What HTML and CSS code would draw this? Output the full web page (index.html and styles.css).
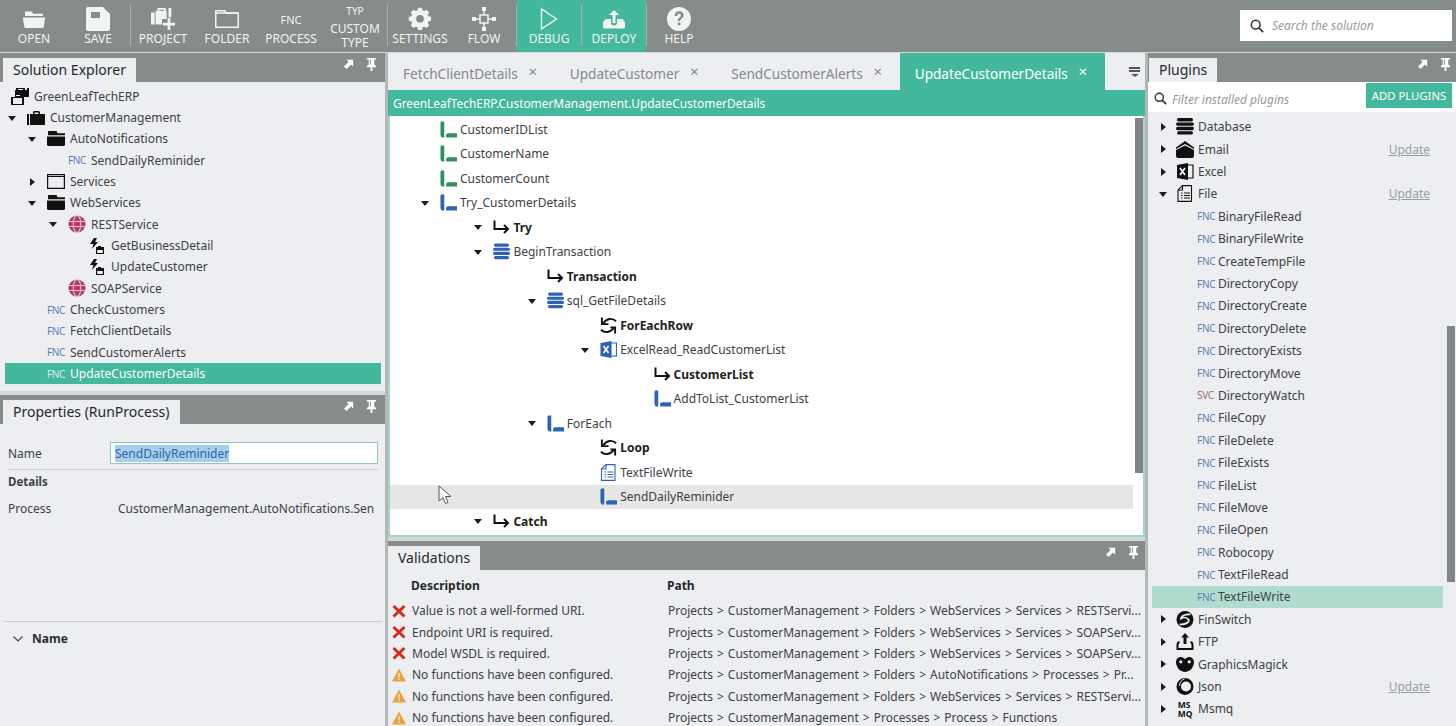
FILE: index.html
```html
<!DOCTYPE html>
<html lang="en">
<head>
  <meta charset="UTF-8">
  <meta name="viewport" content="width=device-width, initial-scale=1.0">
  <title>Solution Designer</title>
  <link rel="stylesheet" href="styles.css">
</head>
<body>
  <!-- Icon sprite -->
  <svg class="sprite" xmlns="http://www.w3.org/2000/svg">
    <symbol id="i-open" viewBox="0 0 32 24"><path d="M4 2h9l2 3h13v3H4z"/><path d="M1 10h30l-2 12a2 2 0 0 1-2 2H5a2 2 0 0 1-2-2z"/></symbol>
    <symbol id="i-save" viewBox="0 0 24 24"><path fill-rule="evenodd" d="M2 0h15l7 7v15a2 2 0 0 1-2 2H2a2 2 0 0 1-2-2V2a2 2 0 0 1 2-2zm3 5v6h9V5z"/><rect x="6" y="6.500" width="3" height="3" fill="#868c8a"/></symbol>
    <symbol id="i-project" viewBox="0 0 26 24"><path d="M0 5h4v13H0zM5 3h2V0h9v3h1v9h-5v6H5zM9 2v1h5V2zM19 0h3v10h-3z"/><path d="M18 11h3v5h5v3h-5v5h-3v-5h-5v-3h5z"/></symbol>
    <symbol id="i-folder-line" viewBox="0 0 32 24"><path fill="none" stroke="currentColor" stroke-width="2" d="M1 23V1h12l2 3h16v19z"/><path d="M1 3h30v2H1z"/></symbol>
    <symbol id="i-gear" viewBox="0 0 24 24"><path fill-rule="evenodd" d="M9.500 0h5l.7 3.300 2 .8L20 2.300l3.500 3.500-1.800 2.800.8 2 3.300.7v5l-3.300.7-.8 2 1.800 2.800-3.500 3.500-2.800-1.800-2 .8-.7 3.300h-5l-.7-3.300-2-.8L4 25.300.5 21.800l1.800-2.800-.8-2L-2 16.300v-5l3.300-.7.8-2L.3 5.800 3.800 2.300l2.800 1.800 2-.8zM12 9a4.800 4.800 0 1 0 0 9.600A4.800 4.800 0 0 0 12 9z" transform="scale(.8) translate(3 1)"/></symbol>
    <symbol id="i-flow" viewBox="0 0 24 24"><g fill="none" stroke="currentColor" stroke-width="1.500"><rect x="8" y="8" width="8" height="8"/><path d="M12 4v4M12 16v4M4 12h4M16 12h4"/></g><rect x="10" y="0" width="4" height="4"/><rect x="10" y="20" width="4" height="4"/><rect x="0" y="10" width="4" height="4"/><rect x="20" y="10" width="4" height="4"/></symbol>
    <symbol id="i-play" viewBox="0 0 18 24"><path fill="none" stroke="currentColor" stroke-width="1.400" d="M1.500 2v20L16.500 12z"/></symbol>
    <symbol id="i-deploy" viewBox="0 0 24 24"><path d="M12 3l5 5h-3.500v8h-3V8H7z"/><path d="M5 12h4v4c0 1.500 1 2.500 3 2.500s3-1 3-2.500v-4h4c2 0 4 2 4 4.500V20a1.500 1.500 0 0 1-1.500 1.500h-19A1.500 1.500 0 0 1 1 20v-3.500C1 14 3 12 5 12z"/></symbol>
    <symbol id="i-help" viewBox="0 0 24 24"><path fill-rule="evenodd" d="M12 0a12 12 0 1 1 0 24 12 12 0 0 1 0-24zM7.500 9h2.700c0-1.500.7-2.200 1.900-2.200 1.100 0 1.800.6 1.800 1.600 0 1-.7 1.500-1.500 2.100-1.200.9-1.700 1.800-1.700 3.500h2.500c0-1.100.4-1.600 1.200-2.200 1.200-.9 2.200-1.800 2.200-3.500 0-2.500-1.900-4-4.400-4C9.400 4.300 7.600 6 7.500 9zm3.300 6.500v2.700h2.700v-2.700z"/></symbol>
    <symbol id="i-search" viewBox="0 0 16 16"><circle cx="6.500" cy="6.500" r="5" fill="none" stroke="currentColor" stroke-width="1.800"/><path d="M10 10l5 5" stroke="currentColor" stroke-width="2"/></symbol>
    <symbol id="i-float" viewBox="0 0 12 12"><path d="M3 1h8v8L8.500 6.500 3 12 0 9l5.500-5.500z"/></symbol>
    <symbol id="i-pin" viewBox="0 0 12 14"><path d="M1 0h10v1.500H9V7l2 1.500V10H7v4H5v-4H1V8.500L3 7V1.500H1zM4.500 1.500V7h1V1.500z"/></symbol>
    <symbol id="i-solution" viewBox="0 0 18 17"><path d="M5 0h9v2h2V0h2v9h-5v8H0V9h4V2h1zm2 1v1h5V1zM2 10v6h9v-6zm3-2h4V7H5z" fill-rule="evenodd"/></symbol>
    <symbol id="i-case" viewBox="0 0 18 14"><path fill-rule="evenodd" d="M0 3h2v11H0zM3 3h3V1l1-1h5l1 1v2h5v11H3zm4.500-1.500V3h4V1.500z"/></symbol>
    <symbol id="i-folder" viewBox="0 0 17 14"><path d="M1 0h8l1 2h7v2H1zM0 5h17v8a1 1 0 0 1-1 1H1a1 1 0 0 1-1-1z"/></symbol>
    <symbol id="i-folder-open" viewBox="0 0 18 15"><path fill="none" stroke="currentColor" stroke-width="1.200" d="M.6.600h16.800v13.800H.6z"/><path d="M.6 2h16.800v1H.6z"/></symbol>
    <symbol id="i-globe" viewBox="0 0 18 18"><circle cx="9" cy="9" r="8.600" fill="#b33a6a"/><path fill="none" stroke="#e7c3d2" stroke-width="1.100" d="M1 6.500h16M1 11.500h16"/><ellipse cx="9" cy="9" rx="3.800" ry="8.500" fill="none" stroke="#e7c3d2" stroke-width="1.100"/></symbol>
    <symbol id="i-op" viewBox="0 0 15 16"><path d="M4 0h3L5 4h3L2 11l1.500-5H0z"/><path d="M6 9h2V8h3v1h3v7H6zm1.200 3v3h5.600v-3z" fill-rule="evenodd"/></symbol>
    <symbol id="i-var" viewBox="0 0 18 17"><path d="M1.500 0H4.500v17H3.500C2 17 .5 16 .5 14V2C.5 1 1 0 1.500 0zM6.500 13.500c1 0 1.500-.5 1.500-1h10V17H6.500z"/></symbol>
    <symbol id="i-return" viewBox="0 0 17 14"><path fill="none" stroke="currentColor" stroke-width="2" d="M1.500 0v8.500h13"/><path fill="none" stroke="currentColor" stroke-width="2" d="M11 4.500l4 4-4 4"/></symbol>
    <symbol id="i-db" viewBox="0 0 18 17"><rect x="1" y="0" width="16" height="3.400" rx="1.700"/><rect x="0" y="4.400" width="18" height="3.400" rx="1.700"/><rect x="0" y="8.800" width="18" height="3.400" rx="1.700"/><rect x="1" y="13.200" width="16" height="3.400" rx="1.700"/></symbol>
    <symbol id="i-loop" viewBox="0 0 18 17"><g fill="none" stroke="currentColor" stroke-width="2"><path d="M17 4C13 0 7 1 3.500 6"/><path d="M2 0v7h7"/><path d="M1 13c4 4 10 3 13.500-2"/><path d="M16 17v-6.500h-5"/></g></symbol>
    <symbol id="i-excel" viewBox="0 0 16 17"><path d="M10 2h6v13h-6z" fill="none" stroke="currentColor" stroke-width="1.200"/><path d="M0 2l11-2v17L0 15z"/><path d="M3 5l5 7M8 5l-5 7" stroke="#fff" stroke-width="1.600"/></symbol>
    <symbol id="i-file" viewBox="0 0 16 17"><g fill="none" stroke="currentColor" stroke-width="1.100"><path d="M5.500.6h9v15.800H1V5z"/><path d="M5.500.6V5H1"/><path d="M7 8h6M7 10.500h6M7 13h6M4 8h1.500M4 10.500h1.500M4 13h1.500"/></g></symbol>
    <symbol id="i-cursor" viewBox="0 0 14 20"><path fill="#fff" stroke="#555" stroke-width="1" d="M1 1v15l4-3.500 2.500 6 2.500-1-2.500-6H13z"/></symbol>
    <symbol id="i-error" viewBox="0 0 14 14"><path d="M1.500 2l11 10.500M12.500 2L1.500 12.500" stroke="#d52b1e" stroke-width="3" fill="none"/></symbol>
    <symbol id="i-warn" viewBox="0 0 14 13"><path fill="#e9a33e" d="M7 0l7 13H0z"/><path d="M6.300 4.500h1.400v4.500H6.300zM6.300 10h1.400v1.500H6.300z" fill="#f7e6c8"/></symbol>
    <symbol id="i-mail" viewBox="0 0 18 17"><path d="M9 0l9 6.500V8L9 3 0 8V6.500zM0 9l9-4.500L18 9v6a2 2 0 0 1-2 2H2a2 2 0 0 1-2-2z"/></symbol>
    <symbol id="i-swirl" viewBox="0 0 17 17"><circle cx="8.500" cy="8.500" r="8.500"/><path fill="none" stroke="#eceef2" stroke-width="1.700" d="M14 3.500C10 3 5 4 4.500 7.500c2.500-1.500 6-1 8 1.500-.5 3-4.500 4.500-9.500 4.500"/></symbol>
    <symbol id="i-upload" viewBox="0 0 17 17"><path d="M8.500 0l4 4.500H10V11H7V4.500H4.500z"/><path fill="none" stroke="currentColor" stroke-width="2" d="M3 9c-2 .5-2 2-2 3v4h15v-4c0-1 0-2.500-2-3"/></symbol>
    <symbol id="i-magick" viewBox="0 0 17 14"><path fill-rule="evenodd" d="M4.500 0C6.200 0 7.500 1 8.500 2c1-1 2.300-2 4-2C15 0 17 2 17 5c0 1.500-.5 2.500-1 3.500-.8 3-3.500 5.500-7.500 5.500S1.800 11.500 1 8.500C.5 7.500 0 6.500 0 5c0-3 2-5 4.500-5zm0 3a1.500 1.500 0 1 0 0 3 1.500 1.500 0 0 0 0-3zm8 0a1.500 1.500 0 1 0 0 3 1.500 1.500 0 0 0 0-3z"/></symbol>
    <symbol id="i-ring" viewBox="0 0 17 17"><path fill-rule="evenodd" d="M8.500 0a8.500 8.500 0 1 1 0 17 8.500 8.500 0 0 1 0-17zm1 3.500a5 5 0 1 0 0 10 5 5 0 0 0 0-10z"/><path d="M8 1c-3 1-5 3.500-5 7" stroke="#eceef2" fill="none"/></symbol>
    <symbol id="i-chevron" viewBox="0 0 10 6"><path fill="none" stroke="currentColor" stroke-width="1.100" d="M.5.500L5 5 9.500.5"/></symbol>
  </svg>

  <header class="toolbar">
    <div class="tool"><svg class="tool-ic"><use href="#i-open"/></svg><span>OPEN</span></div>
    <div class="tool"><svg class="tool-ic"><use href="#i-save"/></svg><span>SAVE</span></div>
    <div class="sep"></div>
    <div class="tool"><svg class="tool-ic"><use href="#i-project"/></svg><span>PROJECT</span></div>
    <div class="tool"><svg class="tool-ic"><use href="#i-folder-line"/></svg><span>FOLDER</span></div>
    <div class="tool"><b class="tool-fnc">FNC</b><span>PROCESS</span></div>
    <div class="tool tool-stack"><b class="tool-typ">TYP</b><span>CUSTOM<br>TYPE</span></div>
    <div class="sep"></div>
    <div class="tool"><svg class="tool-ic"><use href="#i-gear"/></svg><span>SETTINGS</span></div>
    <div class="tool"><svg class="tool-ic"><use href="#i-flow"/></svg><span>FLOW</span></div>
    <div class="sep"></div>
    <div class="tool tool-on"><svg class="tool-ic"><use href="#i-play"/></svg><span>DEBUG</span></div>
    <div class="sep"></div>
    <div class="tool tool-on"><svg class="tool-ic"><use href="#i-deploy"/></svg><span>DEPLOY</span></div>
    <div class="sep"></div>
    <div class="tool"><svg class="tool-ic"><use href="#i-help"/></svg><span>HELP</span></div>
    <div class="search">
      <svg class="search-ic"><use href="#i-search"/></svg>
      <span>Search the solution</span>
    </div>
  </header>

  <main class="workspace">
    <section class="col-left">
      <div class="panel explorer">
        <div class="panel-head">
          <div class="panel-tab">Solution Explorer</div>
          <div class="panel-btns"><svg class="btn-float"><use href="#i-float"/></svg><svg class="btn-pin"><use href="#i-pin"/></svg></div>
        </div>
        <div class="side-tree">
          <div class="row root"><div class="ic-box"><svg class="ic-solution"><use href="#i-solution"/></svg></div><span>GreenLeafTechERP</span></div>
          <div class="row l1"><i class="arrow open"></i><div class="ic-box"><svg class="ic-case"><use href="#i-case"/></svg></div><span>CustomerManagement</span></div>
          <div class="row l2"><i class="arrow open"></i><div class="ic-box"><svg class="ic-folder"><use href="#i-folder"/></svg></div><span>AutoNotifications</span></div>
          <div class="row l3"><i class="arrow none"></i><div class="ic-box"><b class="fnc">FNC</b></div><span>SendDailyReminider</span></div>
          <div class="row l2"><i class="arrow"></i><div class="ic-box"><svg class="ic-folder"><use href="#i-folder-open"/></svg></div><span>Services</span></div>
          <div class="row l2"><i class="arrow open"></i><div class="ic-box"><svg class="ic-folder"><use href="#i-folder"/></svg></div><span>WebServices</span></div>
          <div class="row l3"><i class="arrow open"></i><div class="ic-box"><svg class="ic-globe"><use href="#i-globe"/></svg></div><span>RESTService</span></div>
          <div class="row l4"><i class="arrow none"></i><div class="ic-box"><svg class="ic-op"><use href="#i-op"/></svg></div><span>GetBusinessDetail</span></div>
          <div class="row l4"><i class="arrow none"></i><div class="ic-box"><svg class="ic-op"><use href="#i-op"/></svg></div><span>UpdateCustomer</span></div>
          <div class="row l3"><i class="arrow none"></i><div class="ic-box"><svg class="ic-globe"><use href="#i-globe"/></svg></div><span>SOAPService</span></div>
          <div class="row l2"><i class="arrow none"></i><div class="ic-box"><b class="fnc">FNC</b></div><span>CheckCustomers</span></div>
          <div class="row l2"><i class="arrow none"></i><div class="ic-box"><b class="fnc">FNC</b></div><span>FetchClientDetails</span></div>
          <div class="row l2"><i class="arrow none"></i><div class="ic-box"><b class="fnc">FNC</b></div><span>SendCustomerAlerts</span></div>
          <div class="row l2 selected"><i class="arrow none"></i><div class="ic-box"><b class="fnc">FNC</b></div><span>UpdateCustomerDetails</span></div>
        </div>
      </div>
      <div class="split-h"></div>
      <div class="panel properties">
        <div class="panel-head">
          <div class="panel-tab">Properties (RunProcess)</div>
          <div class="panel-btns"><svg class="btn-float"><use href="#i-float"/></svg><svg class="btn-pin"><use href="#i-pin"/></svg></div>
        </div>
        <div class="prop-body">
          <div class="prop-row">
            <span class="prop-label">Name</span>
            <div class="prop-input"><span class="text-sel">SendDailyReminider</span></div>
          </div>
          <div class="prop-title">Details</div>
          <div class="prop-row prop-row-plain">
            <span class="prop-label">Process</span>
            <span class="prop-value">CustomerManagement.AutoNotifications.Sen</span>
          </div>
        </div>
        <div class="prop-foot"><svg class="ic-chevron"><use href="#i-chevron"/></svg><b>Name</b></div>
      </div>
    </section>

    <div class="split-v"></div>

    <section class="col-center">
      <div class="editor">
        <div class="tabs">
          <div class="tab">FetchClientDetails<span class="tab-x">×</span></div>
          <div class="tab">UpdateCustomer<span class="tab-x">×</span></div>
          <div class="tab">SendCustomerAlerts<span class="tab-x">×</span></div>
          <div class="tab tab-on">UpdateCustomerDetails<span class="tab-x">×</span></div>
          <div class="tabs-menu"><i></i><i></i><em></em></div>
        </div>
        <div class="crumb">GreenLeafTechERP.CustomerManagement.UpdateCustomerDetails</div>
        <div class="flow-tree">
          <div class="row d0"><i class="arrow none"></i><div class="ic-box"><svg class="ic-var green"><use href="#i-var"/></svg></div><span>CustomerIDList</span></div>
          <div class="row d0"><i class="arrow none"></i><div class="ic-box"><svg class="ic-var green"><use href="#i-var"/></svg></div><span>CustomerName</span></div>
          <div class="row d0"><i class="arrow none"></i><div class="ic-box"><svg class="ic-var green"><use href="#i-var"/></svg></div><span>CustomerCount</span></div>
          <div class="row d0"><i class="arrow open"></i><div class="ic-box"><svg class="ic-var blue"><use href="#i-var"/></svg></div><span>Try_CustomerDetails</span></div>
          <div class="row d1 strong"><i class="arrow open"></i><div class="ic-box"><svg class="ic-var"><use href="#i-return"/></svg></div><span>Try</span></div>
          <div class="row d1"><i class="arrow open"></i><div class="ic-box"><svg class="ic-var blue"><use href="#i-db"/></svg></div><span>BeginTransaction</span></div>
          <div class="row d2 strong"><i class="arrow none"></i><div class="ic-box"><svg class="ic-var"><use href="#i-return"/></svg></div><span>Transaction</span></div>
          <div class="row d2"><i class="arrow open"></i><div class="ic-box"><svg class="ic-var blue"><use href="#i-db"/></svg></div><span>sql_GetFileDetails</span></div>
          <div class="row d3 strong"><i class="arrow none"></i><div class="ic-box"><svg class="ic-var"><use href="#i-loop"/></svg></div><span>ForEachRow</span></div>
          <div class="row d3"><i class="arrow open"></i><div class="ic-box"><svg class="ic-var blue"><use href="#i-excel"/></svg></div><span>ExcelRead_ReadCustomerList</span></div>
          <div class="row d4 strong"><i class="arrow none"></i><div class="ic-box"><svg class="ic-var"><use href="#i-return"/></svg></div><span>CustomerList</span></div>
          <div class="row d4"><i class="arrow none"></i><div class="ic-box"><svg class="ic-var blue"><use href="#i-var"/></svg></div><span>AddToList_CustomerList</span></div>
          <div class="row d2"><i class="arrow open"></i><div class="ic-box"><svg class="ic-var blue"><use href="#i-var"/></svg></div><span>ForEach</span></div>
          <div class="row d3 strong"><i class="arrow none"></i><div class="ic-box"><svg class="ic-var"><use href="#i-loop"/></svg></div><span>Loop</span></div>
          <div class="row d3"><i class="arrow none"></i><div class="ic-box"><svg class="ic-var blue"><use href="#i-file"/></svg></div><span>TextFileWrite</span></div>
          <div class="row d3 hovered"><i class="arrow none"></i><div class="ic-box"><svg class="ic-var blue"><use href="#i-var"/></svg></div><span>SendDailyReminider</span></div>
          <div class="row d1 strong"><i class="arrow open"></i><div class="ic-box"><svg class="ic-var"><use href="#i-return"/></svg></div><span>Catch</span></div>
          <div class="scroll scroll-flow"></div>
          <svg class="mouse"><use href="#i-cursor"/></svg>
        </div>
      </div>
      <div class="split-h"></div>
      <div class="panel validations">
        <div class="panel-head">
          <div class="panel-tab">Validations</div>
          <div class="panel-btns"><svg class="btn-float"><use href="#i-float"/></svg><svg class="btn-pin"><use href="#i-pin"/></svg></div>
        </div>
        <div class="val-head"><b>Description</b><b>Path</b></div>
        <div class="val-row"><svg class="val-ic"><use href="#i-error"/></svg><span class="val-desc">Value is not a well-formed URI.</span><span class="val-path">Projects &gt; CustomerManagement &gt; Folders &gt; WebServices &gt; Services &gt; RESTServi...</span></div>
        <div class="val-row"><svg class="val-ic"><use href="#i-error"/></svg><span class="val-desc">Endpoint URI is required.</span><span class="val-path">Projects &gt; CustomerManagement &gt; Folders &gt; WebServices &gt; Services &gt; SOAPServ...</span></div>
        <div class="val-row"><svg class="val-ic"><use href="#i-error"/></svg><span class="val-desc">Model WSDL is required.</span><span class="val-path">Projects &gt; CustomerManagement &gt; Folders &gt; WebServices &gt; Services &gt; SOAPServ...</span></div>
        <div class="val-row"><svg class="val-ic"><use href="#i-warn"/></svg><span class="val-desc">No functions have been configured.</span><span class="val-path">Projects &gt; CustomerManagement &gt; Folders &gt; AutoNotifications &gt; Processes &gt; Pr...</span></div>
        <div class="val-row"><svg class="val-ic"><use href="#i-warn"/></svg><span class="val-desc">No functions have been configured.</span><span class="val-path">Projects &gt; CustomerManagement &gt; Folders &gt; WebServices &gt; Services &gt; RESTServi...</span></div>
        <div class="val-row"><svg class="val-ic"><use href="#i-warn"/></svg><span class="val-desc">No functions have been configured.</span><span class="val-path">Projects &gt; CustomerManagement &gt; Processes &gt; Process &gt; Functions</span></div>
      </div>
    </section>

    <div class="split-v"></div>

    <section class="panel col-right">
      <div class="panel-head">
        <div class="panel-tab">Plugins</div>
        <div class="panel-btns"><svg class="btn-float"><use href="#i-float"/></svg><svg class="btn-pin"><use href="#i-pin"/></svg></div>
      </div>
      <div class="filter">
        <svg class="filter-ic"><use href="#i-search"/></svg>
        <span class="filter-text">Filter installed plugins</span>
        <div class="add-btn">ADD PLUGINS</div>
      </div>
      <div class="plugin-tree">
        <div class="row plug"><i class="arrow"></i><div class="ic-box"><svg class="ic-plug"><use href="#i-db"/></svg></div><span>Database</span></div>
        <div class="row plug"><i class="arrow"></i><div class="ic-box"><svg class="ic-plug"><use href="#i-mail"/></svg></div><span>Email</span><a class="update">Update</a></div>
        <div class="row plug"><i class="arrow"></i><div class="ic-box"><svg class="ic-plug"><use href="#i-excel"/></svg></div><span>Excel</span></div>
        <div class="row plug"><i class="arrow open"></i><div class="ic-box"><svg class="ic-plug"><use href="#i-file"/></svg></div><span>File</span><a class="update">Update</a></div>
        <div class="row child"><b class="fnc">FNC</b><span>BinaryFileRead</span></div>
        <div class="row child"><b class="fnc">FNC</b><span>BinaryFileWrite</span></div>
        <div class="row child"><b class="fnc">FNC</b><span>CreateTempFile</span></div>
        <div class="row child"><b class="fnc">FNC</b><span>DirectoryCopy</span></div>
        <div class="row child"><b class="fnc">FNC</b><span>DirectoryCreate</span></div>
        <div class="row child"><b class="fnc">FNC</b><span>DirectoryDelete</span></div>
        <div class="row child"><b class="fnc">FNC</b><span>DirectoryExists</span></div>
        <div class="row child"><b class="fnc">FNC</b><span>DirectoryMove</span></div>
        <div class="row child"><b class="fnc svc">SVC</b><span>DirectoryWatch</span></div>
        <div class="row child"><b class="fnc">FNC</b><span>FileCopy</span></div>
        <div class="row child"><b class="fnc">FNC</b><span>FileDelete</span></div>
        <div class="row child"><b class="fnc">FNC</b><span>FileExists</span></div>
        <div class="row child"><b class="fnc">FNC</b><span>FileList</span></div>
        <div class="row child"><b class="fnc">FNC</b><span>FileMove</span></div>
        <div class="row child"><b class="fnc">FNC</b><span>FileOpen</span></div>
        <div class="row child"><b class="fnc">FNC</b><span>Robocopy</span></div>
        <div class="row child"><b class="fnc">FNC</b><span>TextFileRead</span></div>
        <div class="row child picked"><b class="fnc">FNC</b><span>TextFileWrite</span></div>
        <div class="row plug"><i class="arrow"></i><div class="ic-box"><svg class="ic-plug"><use href="#i-swirl"/></svg></div><span>FinSwitch</span></div>
        <div class="row plug"><i class="arrow"></i><div class="ic-box"><svg class="ic-plug"><use href="#i-upload"/></svg></div><span>FTP</span></div>
        <div class="row plug"><i class="arrow"></i><div class="ic-box"><svg class="ic-plug"><use href="#i-magick"/></svg></div><span>GraphicsMagick</span></div>
        <div class="row plug"><i class="arrow"></i><div class="ic-box"><svg class="ic-plug"><use href="#i-ring"/></svg></div><span>Json</span><a class="update">Update</a></div>
        <div class="row plug"><i class="arrow"></i><div class="ic-box"><b class="msmq">MS<br>MQ</b></div><span>Msmq</span></div>
        <div class="scroll scroll-plugins"></div>
      </div>
    </section>
  </main>
</body>
</html>
```

FILE: styles.css
```css
* {
  box-sizing: border-box;
}
html, body {
  height: 100%;
}
body {
  margin: 0;
  height: 726px;
  overflow: hidden;
  display: flex;
  flex-direction: column;
  background: #d5d8d9;
  color: #3d4144;
  font-family: "Noto Sans", "Open Sans", sans-serif;
  font-size: 12px;
}
svg {
  fill: currentColor;
}
.sprite {
  display: none;
}

/* Toolbar */
.toolbar {
  height: 52px;
  flex: none;
  display: flex;
  padding-left: 2px;
  background: #868c8a;
  color: #fff;
}
.tool {
  width: 64px;
  height: 52px;
  flex: none;
  display: flex;
  flex-direction: column;
  align-items: center;
  justify-content: flex-end;
  padding-bottom: 6px;
  font-size: 12px;
  line-height: 14px;
  color: #f2f4f3;
  position: relative;
}
.tool-ic {
  width: 24px;
  height: 24px;
  position: absolute;
  top: 7px;
  left: 20px;
}
.tool-on {
  background: #43b89c;
}
.tool-fnc {
  position: absolute;
  top: 13px;
  font-weight: 400;
  font-size: 11px;
}
.tool-typ {
  position: absolute;
  top: 4px;
  font-weight: 400;
  font-size: 10px;
}
.tool-stack {
  padding-bottom: 2px;
  text-align: center;
  line-height: 14px;
}
.sep {
  width: 1px;
  height: 42px;
  margin-top: 4px;
  flex: none;
  background: #a9aeac;
}
.search {
  margin: 10px 4px 0 auto;
  width: 212px;
  height: 31px;
  display: flex;
  align-items: center;
  background: #fff;
  color: #999;
  font-style: italic;
}
.search-ic {
  width: 14px;
  height: 14px;
  margin: 0 8px 0 10px;
  color: #333;
}

/* Workspace columns */
.workspace {
  flex: 1;
  min-height: 0;
  display: grid;
  grid-template-columns: 385px 3px 757px 3px 308px;
  padding-top: 1px;
}
.col-left, .col-center {
  display: flex;
  flex-direction: column;
  min-height: 0;
}
.split-v {
  background: #b3b7b7;
}
.split-h {
  height: 4px;
  flex: none;
  background: #d5d8d9;
}
.panel {
  background: #eceef2;
  min-height: 0;
  position: relative;
  overflow: hidden;
}
.panel-head {
  height: 29px;
  flex: none;
  padding: 5px 0 0 3px;
  display: flex;
  background: #868c8a;
}
.validations .panel-head {
  padding-left: 0;
}
.col-right .panel-head {
  padding-left: 1px;
}
.panel-tab {
  height: 24px;
  padding: 0 10px 1px;
  display: flex;
  align-items: center;
  background: #eceef2;
  color: #26292b;
  font-size: 14px;
}
.panel-btns {
  margin-left: auto;
  display: flex;
  padding: 0 8px 0 0;
  color: #fff;
  gap: 12px;
  height: 16px;
  margin-top: -2px;
  align-items: center;
}
.validations .panel-btns {
  padding-right: 6px;
}
.col-right .panel-btns {
  padding-right: 5px;
}
.btn-float {
  width: 10px;
  height: 10px;
}
.btn-pin {
  width: 11px;
  height: 13px;
}

/* Tree rows */
.row {
  display: flex;
  align-items: center;
  white-space: nowrap;
  position: relative;
}
.arrow {
  width: 20px;
  height: 100%;
  flex: none;
  position: relative;
}
.arrow::after {
  content: "";
  position: absolute;
  left: 8px;
  top: 50%;
  margin-top: -4px;
  border-left: 5px solid #1c1c1c;
  border-top: 4px solid transparent;
  border-bottom: 4px solid transparent;
}
.arrow.open::after {
  left: 6px;
  margin-top: -2px;
  border-top: 5px solid #1c1c1c;
  border-left: 4.5px solid transparent;
  border-right: 4.5px solid transparent;
  border-bottom: 0;
}
.arrow.none::after {
  display: none;
}
.ic-box {
  width: 28px;
  flex: none;
  display: flex;
  justify-content: center;
  align-items: center;
  color: #111;
}
.fnc {
  font-weight: 400;
  font-size: 10px;
  letter-spacing: -0.3px;
  color: #5b7fb5;
}
.svc {
  color: #a86a6a;
}

/* Solution explorer */
.explorer {
  height: 338px;
  flex: none;
}
.side-tree {
  padding-top: 3.6px;
}
.side-tree .row {
  height: 21.33px;
}
.root {
  padding-left: 6px;
}
.l1 { padding-left: 2px; }
.l2 { padding-left: 22px; }
.l3 { padding-left: 43px; }
.l4 { padding-left: 63px; }
.ic-solution {
  width: 18px;
  height: 17px;
}
.ic-case {
  width: 18px;
  height: 14px;
}
.ic-folder {
  width: 18px;
  height: 15px;
}
.ic-globe {
  width: 18px;
  height: 18px;
}
.ic-op {
  width: 15px;
  height: 16px;
}
.selected {
  margin: 0 4px 0 5px;
  padding-left: 17px;
  background: #43b89c;
  color: #fff;
}
.selected .fnc {
  color: #d7ecf0;
}

/* Properties */
.properties {
  flex: 1;
  display: flex;
  flex-direction: column;
}
.prop-body {
  flex: 1;
  padding: 18px 7px 0 8px;
}
.prop-row {
  display: flex;
  align-items: center;
  height: 22px;
}
.prop-label {
  width: 102px;
  flex: none;
}
.prop-input {
  width: 268px;
  height: 22px;
  padding-left: 4px;
  display: flex;
  align-items: center;
  background: #fff;
  border: 1px solid #8ccab9;
}
.text-sel {
  background: #a8cdf0;
  color: #2b6a9c;
}
.prop-title {
  margin-top: 5px;
  padding-top: 4px;
  border-top: 1px solid #d0d3d6;
  height: 23px;
  font-weight: 700;
  font-size: 11.5px;
}
.prop-row-plain .prop-label {
  width: 110px;
}
.prop-row-plain {
  margin-top: 5px;
}
.prop-value {
  white-space: nowrap;
}
.prop-foot {
  margin: 0 3px 0 4px;
  height: 105px;
  padding: 8px 0 0 9px;
  display: flex;
  align-items: flex-start;
  gap: 9px;
  border-top: 1px solid #c9cccf;
}
.prop-foot b {
  color: #2a2d30;
  line-height: 18px;
}
.ic-chevron {
  width: 10px;
  height: 6px;
  margin-top: 6px;
}

/* Editor */
.editor {
  height: 484px;
  flex: none;
  display: flex;
  flex-direction: column;
}
.tabs {
  height: 37px;
  flex: none;
  display: flex;
  background: #eceef2;
  position: relative;
}
.tab {
  display: flex;
  align-items: center;
  padding: 4px 16px 0 15px;
  font-size: 13.6px;
  color: #85898d;
  white-space: nowrap;
}
.tab-x {
  margin: -6px 0 0 9px;
  width: 12px;
  text-align: center;
  font-size: 15px;
  line-height: 14px;
}
.tab-on {
  background: #43b89c;
  color: #fff;
}
.tabs-menu {
  margin-left: auto;
  width: 21px;
  padding: 14px 5px 0;
  display: flex;
  flex-direction: column;
  gap: 1px;
}
.tabs-menu i {
  height: 2px;
  background: #555;
}
.tabs-menu em {
  margin: 1px auto 0;
  border-top: 3px solid #555;
  border-left: 4px solid transparent;
  border-right: 4px solid transparent;
}
.crumb {
  height: 26px;
  flex: none;
  padding-left: 5px;
  display: flex;
  align-items: center;
  background: #43b89c;
  color: #fff;
  font-size: 11.9px;
}
.flow-tree {
  flex: 1;
  min-height: 0;
  padding-top: 1px;
  position: relative;
  overflow: hidden;
  background: #fff;
  border: solid #9fd8ca;
  border-width: 0 2px 2px;
}
.flow-tree .row {
  height: 24.5px;
}
.flow-tree .ic-box {
  width: 25px;
  justify-content: flex-end;
  padding-right: 3px;
}
.d0 { padding-left: 25px; }
.d1 { padding-left: 78.4px; }
.d2 { padding-left: 131.8px; }
.d3 { padding-left: 185.2px; }
.d4 { padding-left: 238.6px; }
.ic-var {
  width: 17px;
  height: 17px;
  flex: none;
}
.flow-tree .ic-box .green {
  color: #2f8f5f;
}
.flow-tree .ic-box .blue {
  color: #2f62b3;
}
.strong {
  font-weight: 700;
  color: #222;
}
.hovered {
  margin-right: 10px;
  background: #e6e6e6;
}
.scroll {
  position: absolute;
  width: 8px;
  background: #808484;
}
.scroll-flow {
  top: 2px;
  right: 0;
  height: 355px;
}
.mouse {
  position: absolute;
  left: 48px;
  top: 369px;
  width: 14px;
  height: 20px;
}

/* Validations */
.validations {
  flex: 1;
  display: flex;
  flex-direction: column;
}
.val-head {
  display: flex;
  padding: 7px 0 0 23px;
  height: 30px;
  flex: none;
  color: #26292b;
}
.val-head b:first-child {
  width: 256px;
}
.val-row {
  height: 21.4px;
  flex: none;
  display: flex;
  align-items: center;
  white-space: nowrap;
  padding-left: 4px;
}
.val-ic {
  width: 14px;
  height: 14px;
  flex: none;
  margin-right: 6px;
}
.val-desc {
  width: 256px;
  flex: none;
}
.val-path {
  word-spacing: 0.9px;
}

/* Plugins */
.col-right {
  display: flex;
  flex-direction: column;
}
.filter {
  height: 30px;
  flex: none;
  padding-left: 6px;
  display: flex;
  align-items: center;
  background: #fff;
  color: #999;
  font-style: italic;
}
.filter-ic {
  width: 13px;
  height: 13px;
  margin: 2px 5px 0 0;
  color: #333;
}
.filter-text {
  margin-top: 5px;
}
.add-btn {
  margin: 0 4px 4px auto;
  width: 86px;
  height: 25px;
  display: flex;
  align-items: center;
  justify-content: center;
  background: #43b89c;
  color: #fff;
  font-style: normal;
  font-size: 11.3px;
}
.plugin-tree {
  flex: 1;
  min-height: 0;
  position: relative;
  padding-top: 3.6px;
}
.plugin-tree .row {
  height: 22.4px;
}
.plug {
  padding: 0 26px 0 5px;
}
.plug .ic-box {
  width: 24px;
  margin-right: 1px;
}
.ic-plug {
  width: 18px;
  height: 17px;
}
.msmq {
  font-size: 8.5px;
  line-height: 9px;
  font-weight: 700;
}
.update {
  margin-left: auto;
  color: #9a9ea2;
  text-decoration: underline;
}
.child {
  padding-left: 49px;
}
.child .fnc {
  width: 21px;
  flex: none;
}
.picked {
  margin: 0 13px 0 4px;
  padding-left: 45px;
  background: #b0dccf;
}
.scroll-plugins {
  top: 214px;
  right: 1px;
  height: 256px;
}
```
